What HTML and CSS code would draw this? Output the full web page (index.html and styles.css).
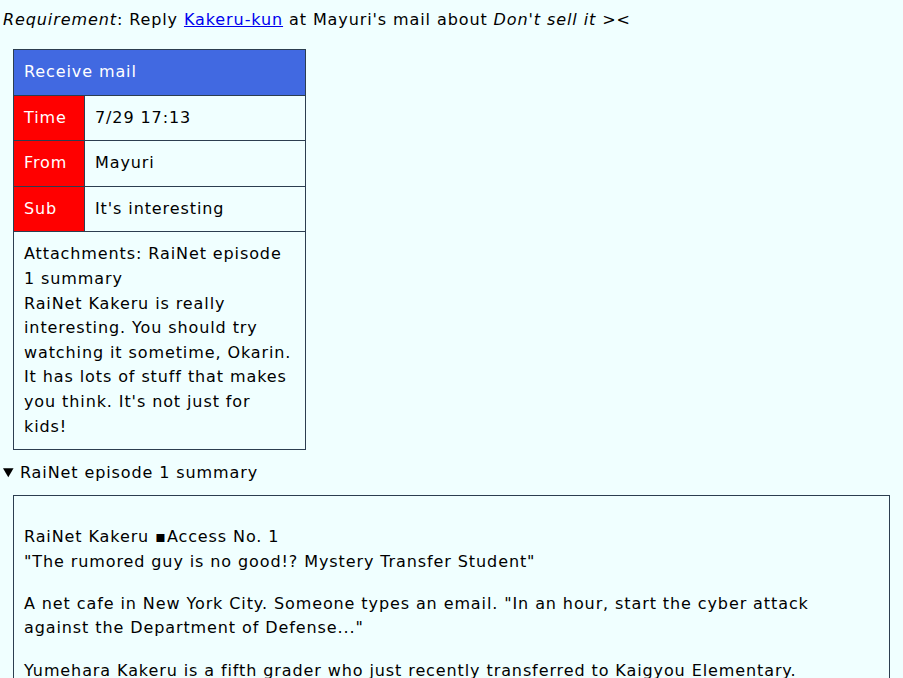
FILE: index.html
```html
<!DOCTYPE html>
<html>
<head>
<meta charset="utf-8">
<link rel="stylesheet" href="styles.css">
</head>
<body>
<p class="req"><em>Requirement</em>: Reply <a href="#">Kakeru-kun</a> at Mayuri's mail about <em>Don't sell it</em> &gt;&lt;</p>
<table class="mail">
  <colgroup><col class="c-label"><col></colgroup>
  <tr><th colspan="2" class="head">Receive mail</th></tr>
  <tr><th class="label">Time</th><td>7/29 17:13</td></tr>
  <tr><th class="label">From</th><td>Mayuri</td></tr>
  <tr><th class="label">Sub</th><td>It's interesting</td></tr>
  <tr><td colspan="2">Attachments: RaiNet episode 1 summary<br>RaiNet Kakeru is really interesting. You should try watching it sometime, Okarin. It has lots of stuff that makes you think. It's not just for kids!</td></tr>
</table>
<details open class="att">
  <summary>RaiNet episode 1 summary</summary>
  <div class="box">
    <p>RaiNet Kakeru ▪Access No. 1<br>"The rumored guy is no good!? Mystery Transfer Student"</p>
    <p>A net cafe in New York City. Someone types an email. "In an hour, start the cyber attack against the Department of Defense..."</p>
    <p>Yumehara Kakeru is a fifth grader who just recently transferred to Kaigyou Elementary.<br>He doesn't talk to anyone and keeps to himself, so the other kids think he is strange.</p>
    <p>Meanwhile, the Department of Defense gets attacked.</p>
  </div>
</details>
</body>
</html>
```
FILE: styles.css
```css
html { background: #f0ffff; }
body {
  margin: 0;
  padding: 8px 3px 0 3px;
  font-family: "DejaVu Sans", Verdana, sans-serif;
  font-size: 16px;
  letter-spacing: 0.9px;
  line-height: 24.6px;
  color: #000;
  background: #f0ffff;
}
.req { margin: 0 0 16.4px 0; }
.req a { color: #0000ee; }
.mail {
  margin: 0 0 11px 10px;
  width: 293px;
  border-collapse: collapse;
  table-layout: fixed;
  border: 1px solid #2c3e50;
}
.c-label { width: 71px; }
.mail th, .mail td {
  border: 1px solid #2c3e50;
  padding: 10px;
  text-align: left;
  font-weight: normal;
  vertical-align: middle;
}
.mail .head { background: #4169e1; color: #fff; }
.mail .label { background: #ff0000; color: #fff; }
.mail td { background: #f0ffff; }
.att summary { cursor: pointer; }
.box {
  margin: 9px 10px 0 10px;
  padding: 12px 10px 0 10px;
  border: 1px solid #2c3e50;
}
.box p { margin: 17.5px 0; }
```
